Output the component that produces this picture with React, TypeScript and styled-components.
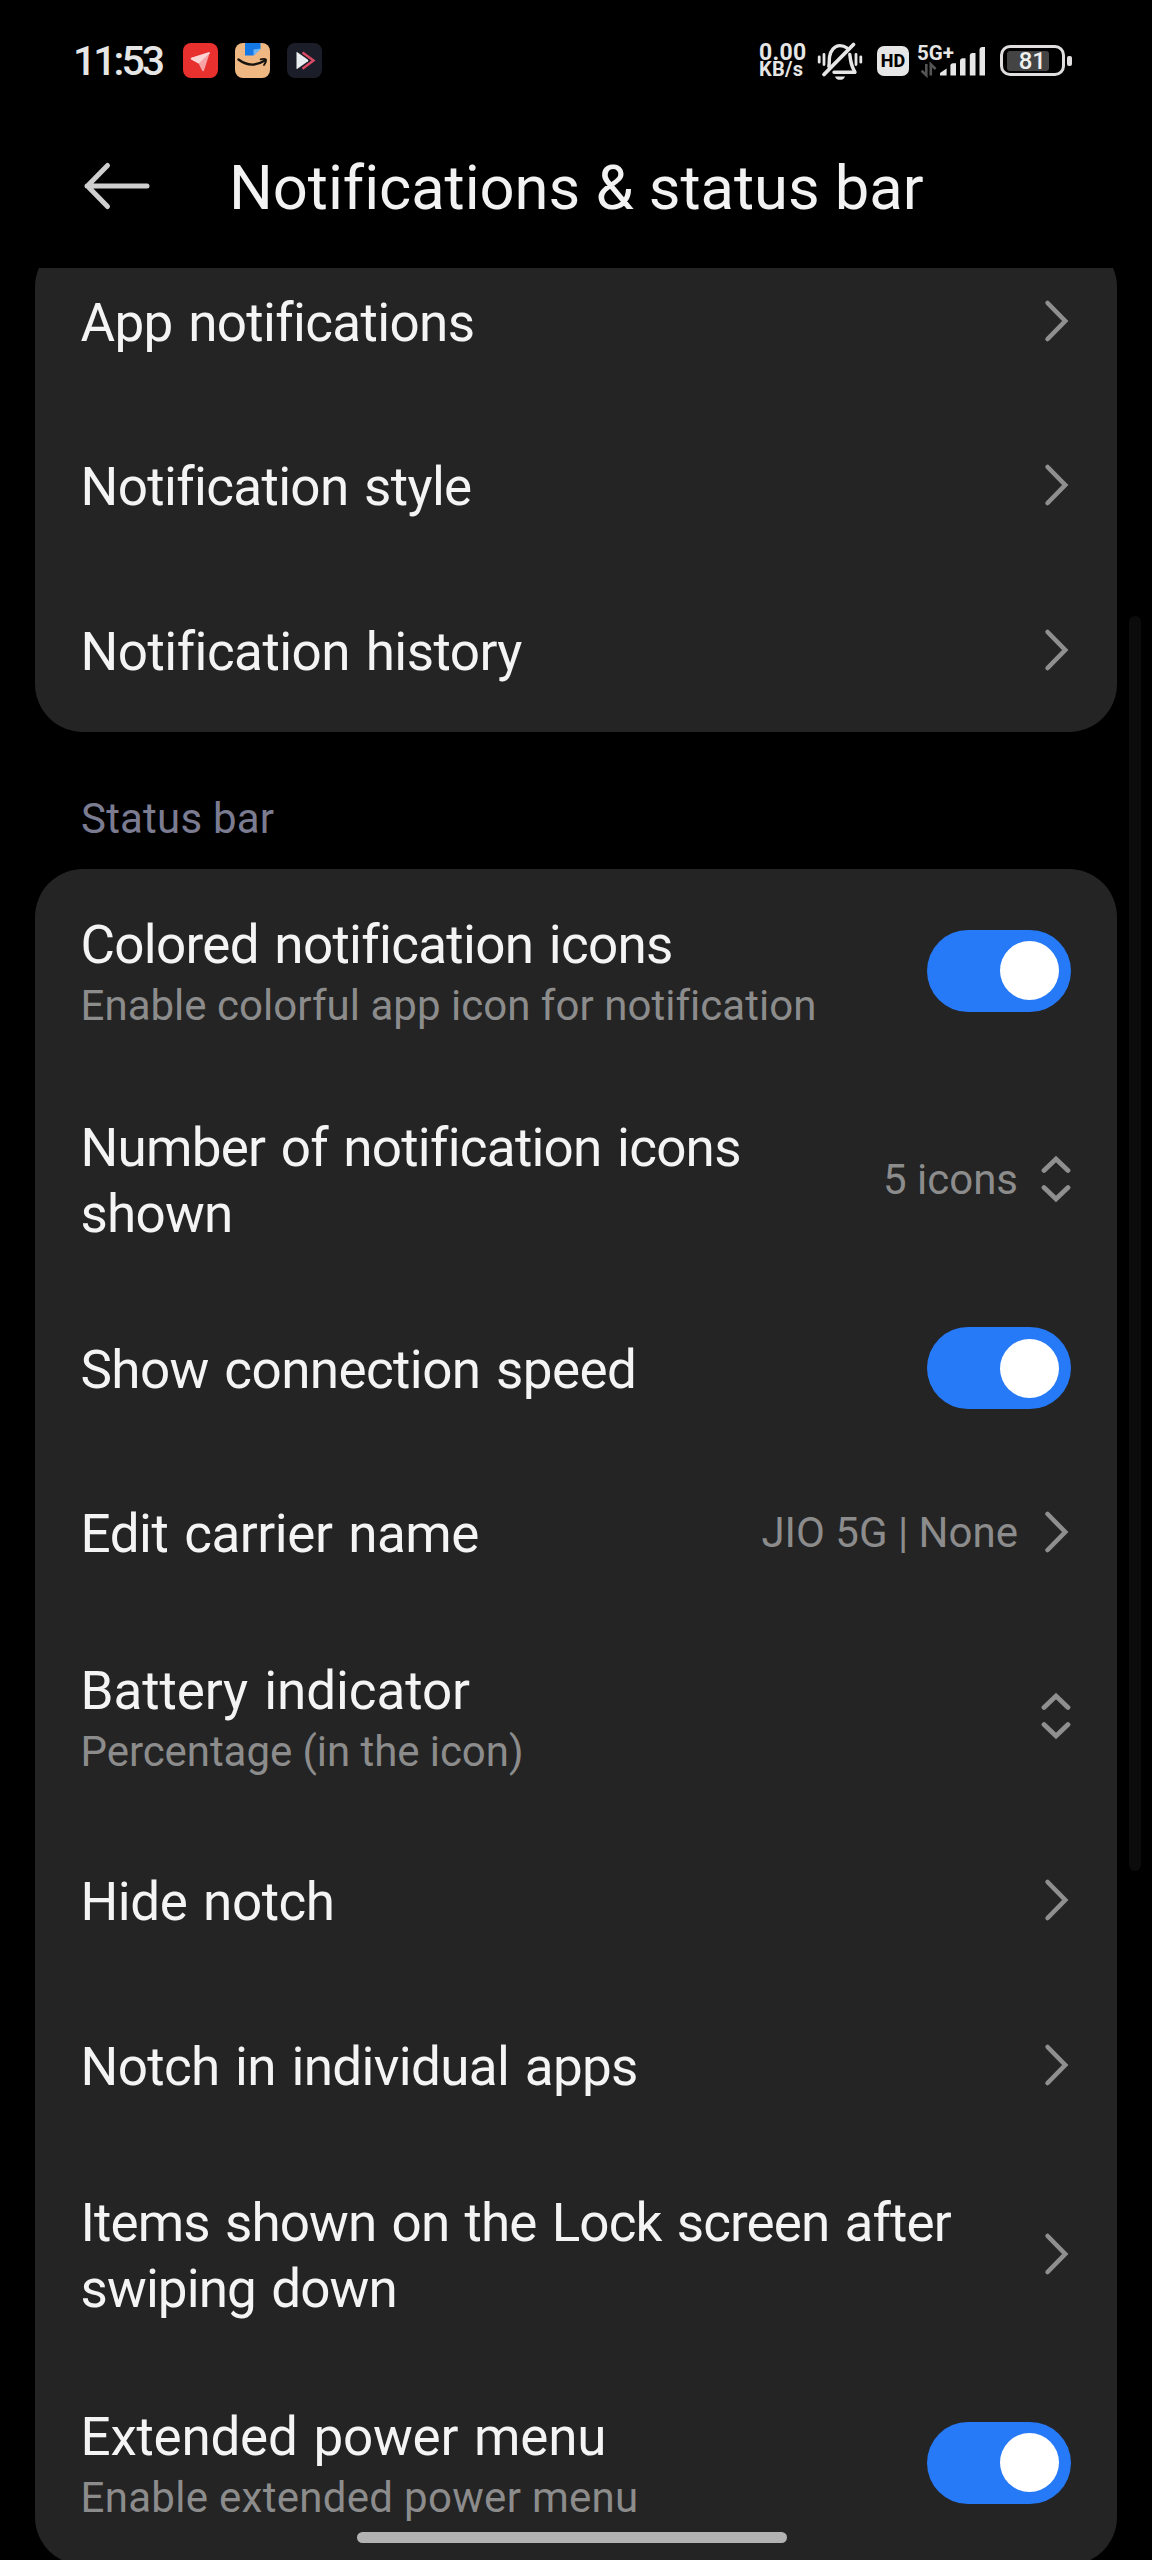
import React from "react";
import styled, { createGlobalStyle } from "styled-components";

const GlobalStyle = createGlobalStyle`
  *, *::before, *::after { box-sizing: border-box; }
  html, body { margin: 0; padding: 0; background: #000; }
  body {
    font-family: Roboto, "Noto Sans", sans-serif;
    font-variant-ligatures: none;
    overflow: hidden;
  }
`;

const Screen = styled.div`
  position: relative;
  display: flex;
  flex-direction: column;
  width: 1152px;
  height: 2560px;
  overflow: hidden;
  background: #000;
  color: #f4f4f4;
`;

const StatusBar = styled.header`
  display: flex;
  justify-content: space-between;
  align-items: center;
  height: 121px;
  padding: 0 80px 0 73px;
`;

const StatusGroup = styled.div`
  display: flex;
  align-items: center;
`;

const Clock = styled.span`
  width: 110px;
  font-size: 41px;
  line-height: 48px;
  font-weight: 500;
  letter-spacing: -3px;
  color: #e6e6e6;
`;

const AppIcons = styled.div`
  display: flex;
  gap: 17px;
`;

const Speed = styled.div`
  display: flex;
  flex-direction: column;
  width: 58px;
  font-weight: 700;
  color: #e6e6e6;
`;

const SpeedLine = styled.span<{ $size: number; $tracking: number }>`
  font-size: ${(p) => p.$size}px;
  line-height: 17px;
  letter-spacing: ${(p) => p.$tracking}px;
`;

const HdBadge = styled.span`
  display: flex;
  align-items: center;
  justify-content: center;
  width: 32px;
  height: 30px;
  margin: 0 8px 0 14px;
  border-radius: 7px;
  background: #e6e6e6;
  color: #000;
  font-size: 18px;
  font-weight: 800;
  line-height: 30px;
`;

const Network = styled.div`
  position: relative;
  width: 70px;
  height: 36px;
  margin-right: 13px;
`;

const NetworkLabel = styled.span`
  position: absolute;
  left: 0;
  top: 0;
  font-size: 20.5px;
  line-height: 20px;
  font-weight: 700;
  color: #e6e6e6;
`;

const Battery = styled.div`
  display: flex;
  align-items: center;
  gap: 2px;
`;

const BatteryBody = styled.div`
  display: flex;
  width: 65px;
  height: 31px;
  padding: 2.5px 4px;
  border: 3px solid #e0dede;
  border-radius: 10px;
`;

const BatteryLevel = styled.div`
  width: 42px;
  height: 20px;
  border-radius: 3px;
  background: #444;
  color: #f0f0f0;
  font-size: 24px;
  line-height: 21px;
  font-weight: 500;
  text-align: right;
  padding-right: 3px;
`;

const BatteryNub = styled.div`
  width: 5px;
  height: 10px;
  border-radius: 2px;
  background: #e0dede;
`;

const TitleBar = styled.div`
  display: flex;
  align-items: center;
  height: 147px;
  padding: 0 0 17px 82px;
`;

const Title = styled.h1`
  margin: 3px 0 0 77px;
  font-size: 61.5px;
  line-height: 76px;
  font-weight: 400;
  letter-spacing: -0.05px;
  color: #f2f2f2;
`;

const ScrollArea = styled.main`
  flex: 1;
  min-height: 0;
  overflow: hidden;
  padding: 0 35px;
`;

const Card = styled.section<{ $scrolled?: boolean }>`
  margin-top: ${(p) => (p.$scrolled ? "-29px" : "0")};
  border-radius: 48px;
  background: #242424;
`;

const SectionLabel = styled.h2`
  margin: 0;
  padding: 0 46px;
  height: 137px;
  font-size: 42px;
  line-height: 174px;
  font-weight: 400;
  letter-spacing: 0.2px;
  color: #7b7c91;
`;

const Row = styled.div<{ $height: number }>`
  display: flex;
  align-items: center;
  justify-content: space-between;
  height: ${(p) => p.$height}px;
  padding: 0 46px 0 45.5px;
`;

const Labels = styled.div`
  display: flex;
  flex-direction: column;
  padding-top: 4px;
`;

const RowTitle = styled.span<{ $tracking: number }>`
  font-size: 53px;
  line-height: 66px;
  letter-spacing: ${(p) => p.$tracking}px;
  word-spacing: 3px;
  white-space: pre;
  color: #f4f4f4;
`;

const RowSub = styled.span<{ $tracking: number }>`
  font-size: 42px;
  line-height: 55px;
  letter-spacing: ${(p) => p.$tracking}px;
  white-space: pre;
  color: #8c8c8c;
`;

const Trailing = styled.div`
  display: flex;
  align-items: center;
`;

const Value = styled.span`
  margin-right: 23px;
  padding-top: 1px;
  font-size: 42px;
  line-height: 55px;
  white-space: pre;
  color: #8c8c8c;
`;

const Switch = styled.div`
  display: flex;
  align-items: center;
  justify-content: flex-end;
  width: 144px;
  height: 82px;
  padding-right: 12px;
  border-radius: 41px;
  background: #2679f7;
`;

const Knob = styled.div`
  width: 59px;
  height: 59px;
  border-radius: 50%;
  background: #fff;
`;

const ScrollThumb = styled.div`
  position: absolute;
  left: 1129px;
  top: 616px;
  width: 12px;
  height: 1255px;
  border-radius: 6px;
  background: #0c0c0c;
`;

const HomeIndicator = styled.div`
  position: absolute;
  left: 357px;
  top: 2532px;
  width: 430px;
  height: 11px;
  border-radius: 5.5px;
  background: #b2b2b2;
`;

const Chevron = () => (
  <svg width="30" height="46" viewBox="0 0 30 46" fill="none" stroke="#8f8f8f" strokeWidth="4.6" strokeLinecap="round">
    <path d="M6.6 5 24.2 23 6.6 41" />
  </svg>
);

const UpDown = () => (
  <svg width="30" height="48" viewBox="0 0 30 48" fill="none" stroke="#8f8f8f" strokeWidth="4.8" strokeLinecap="round">
    <path d="M3 15.4 15 4 27 15.4M3 32.6 15 44 27 32.6" />
  </svg>
);

const BackArrow = () => (
  <svg width="70" height="52" viewBox="0 0 70 52" fill="none" stroke="#cfcfcf" strokeWidth="5" strokeLinecap="round" strokeLinejoin="round">
    <path d="M5 26H65M25.5 5.5 5.4 26 25.5 46.5" />
  </svg>
);

const SendIcon = () => (
  <svg width="35" height="35" viewBox="0 0 35 35">
    <rect width="35" height="35" rx="8" fill="#e8302f" />
    <path d="M8.5 14.8 25.8 9.3Q27 9 26.6 10.2L21 27.4Q20.3 29 19.2 27.6L15.6 20.4 8.3 16.6Q6.9 15.6 8.5 14.8Z" fill="#f7a3a6" />
    <path d="M8.5 14.8 25.8 9.3Q27 9 26.6 10.2L15.6 20.4 8.3 16.6Q6.9 15.6 8.5 14.8Z" fill="#fbd5d6" />
  </svg>
);

const ParcelIcon = () => (
  <svg width="35" height="35" viewBox="0 0 35 35">
    <rect width="35" height="35" rx="8" fill="#efb883" />
    <path d="M10 0H25.5V5.5L18.5 12.5H10Z" fill="#1479e6" />
    <path d="M25.5 5.5V6.5L18.5 12.8V6.5Z" fill="#6db4f5" />
    <path d="M3.5 16.5Q16 26 29.5 17.8" fill="none" stroke="#17130f" strokeWidth="2.4" strokeLinecap="round" />
    <path d="M25.6 16.4Q30 15.4 31 16.6Q31.4 18.6 29 22" fill="none" stroke="#17130f" strokeWidth="1.8" strokeLinecap="round" />
  </svg>
);

const PlayIcon = () => (
  <svg width="35" height="35" viewBox="0 0 35 35">
    <rect width="35" height="35" rx="8" fill="#1b1d29" />
    <path d="M15.5 9.5 26.5 17.5 15.5 25.8" fill="none" stroke="#dc4a64" strokeWidth="2.4" />
    <path d="M9.5 9.5Q9.5 8.6 10.4 9.2L21 16.8Q21.8 17.5 21 18.2L10.4 25.8Q9.5 26.4 9.5 25.4Z" fill="#e9eef0" />
  </svg>
);

const MuteBell = () => (
  <svg width="46" height="40" viewBox="0 0 46 40" fill="none" stroke="#e6e6e6" strokeWidth="3.4" strokeLinecap="round" strokeLinejoin="round">
    <path d="M11.8 25.5C12.6 22 12 19 12.6 15.5 13.5 9.6 17.5 4.6 22.8 4.6 25.5 4.6 28 5.4 30 7" />
    <path d="M36.5 3.5 7 33.5" strokeWidth="3.8" />
    <path d="M32.8 13.5C33.6 20.5 34 24.5 38 31.2H17" />
    <path d="M18 35.4H28Q27 38.8 23 38.8 19 38.8 18 35.4Z" fill="#e6e6e6" stroke="none" />
    <path d="M7 13.5V23.5M2.2 15.8V21.2M39 13.5V23.5M43.8 15.8V21.2" strokeWidth="2.8" />
  </svg>
);

const SignalBars = styled.svg`
  position: absolute;
  left: 0;
  top: 0;
`;

const Signal = () => (
  <SignalBars width="70" height="36" viewBox="0 0 70 36">
    <g fill="none" stroke="#555" strokeWidth="2.6">
      <path d="M9.3 21V32.3L4.6 27.8M13.8 32.5V21.4L18.6 26" />
    </g>
    <g fill="#e6e6e6">
      <path d="M23 30 29.6 25.5V32.6H23Z" />
      <path d="M33.4 22.4Q33.4 20.4 35.6 20.2H39V32.6H33.4Z" />
      <path d="M43 17.6Q43 15.4 45.4 15.2H48.5V32.6H43Z" />
      <path d="M52.8 12.4Q52.8 10.2 55.2 10H58.5V32.6H52.8Z" />
      <path d="M62.5 6.4Q62.5 4.2 65 4H68V32.6H62.5Z" />
    </g>
  </SignalBars>
);

type Kind = "link" | "select" | "switch";

interface Item {
  title: string;
  sub?: string;
  value?: string;
  kind: Kind;
  height: number;
  tracking?: number;
  subTracking?: number;
}

const notificationItems: Item[] = [
  { title: "App notifications", kind: "link", height: 164.3, tracking: -0.65 },
  { title: "Notification style", kind: "link", height: 164.3, tracking: -0.65 },
  { title: "Notification history", kind: "link", height: 164.3, tracking: -0.53 },
];

const statusBarItems: Item[] = [
  {
    title: "Colored notification icons",
    sub: "Enable colorful app icon for notification",
    kind: "switch",
    height: 203.5,
    tracking: -0.7,
    subTracking: 0.03,
  },
  { title: "Number of notification icons\nshown", value: "5 icons", kind: "select", height: 213.6, tracking: -0.75 },
  { title: "Show connection speed", kind: "switch", height: 164.3, tracking: -0.6 },
  { title: "Edit carrier name", value: "JIO 5G | None", kind: "link", height: 164.3, tracking: -0.45 },
  {
    title: "Battery indicator",
    sub: "Percentage (in the icon)",
    kind: "select",
    height: 203.5,
    tracking: -0.08,
    subTracking: -0.06,
  },
  { title: "Hide notch", kind: "link", height: 164.3, tracking: -0.45 },
  { title: "Notch in individual apps", kind: "link", height: 164.3, tracking: -0.65 },
  { title: "Items shown on the Lock screen after\nswiping down", kind: "link", height: 214.4, tracking: -0.9 },
  {
    title: "Extended power menu",
    sub: "Enable extended power menu",
    kind: "switch",
    height: 203.5,
    tracking: -0.24,
    subTracking: 0.3,
  },
];

const SettingRow = ({ item }: { item: Item }) => (
  <Row $height={item.height}>
    <Labels>
      <RowTitle $tracking={item.tracking ?? 0}>{item.title}</RowTitle>
      {item.sub && <RowSub $tracking={item.subTracking ?? 0}>{item.sub}</RowSub>}
    </Labels>
    <Trailing>
      {item.value && <Value>{item.value}</Value>}
      {item.kind === "link" && <Chevron />}
      {item.kind === "select" && <UpDown />}
      {item.kind === "switch" && (
        <Switch role="switch" aria-checked="true">
          <Knob />
        </Switch>
      )}
    </Trailing>
  </Row>
);

export default function App() {
  return (
    <>
      <GlobalStyle />
      <Screen>
        <StatusBar>
          <StatusGroup>
            <Clock>11:53</Clock>
            <AppIcons>
              <SendIcon />
              <ParcelIcon />
              <PlayIcon />
            </AppIcons>
          </StatusGroup>
          <StatusGroup>
            <Speed>
              <SpeedLine $size={23} $tracking={0.3}>0.00</SpeedLine>
              <SpeedLine $size={20} $tracking={0.3}>KB/s</SpeedLine>
            </Speed>
            <MuteBell />
            <HdBadge>HD</HdBadge>
            <Network>
              <NetworkLabel>5G+</NetworkLabel>
              <Signal />
            </Network>
            <Battery>
              <BatteryBody>
                <BatteryLevel>81</BatteryLevel>
              </BatteryBody>
              <BatteryNub />
            </Battery>
          </StatusGroup>
        </StatusBar>
        <TitleBar>
          <BackArrow />
          <Title>Notifications &amp; status bar</Title>
        </TitleBar>
        <ScrollArea>
          <Card $scrolled>
            {notificationItems.map((item) => (
              <SettingRow key={item.title} item={item} />
            ))}
          </Card>
          <SectionLabel>Status bar</SectionLabel>
          <Card>
            {statusBarItems.map((item) => (
              <SettingRow key={item.title} item={item} />
            ))}
          </Card>
        </ScrollArea>
        <ScrollThumb />
        <HomeIndicator />
      </Screen>
    </>
  );
}
